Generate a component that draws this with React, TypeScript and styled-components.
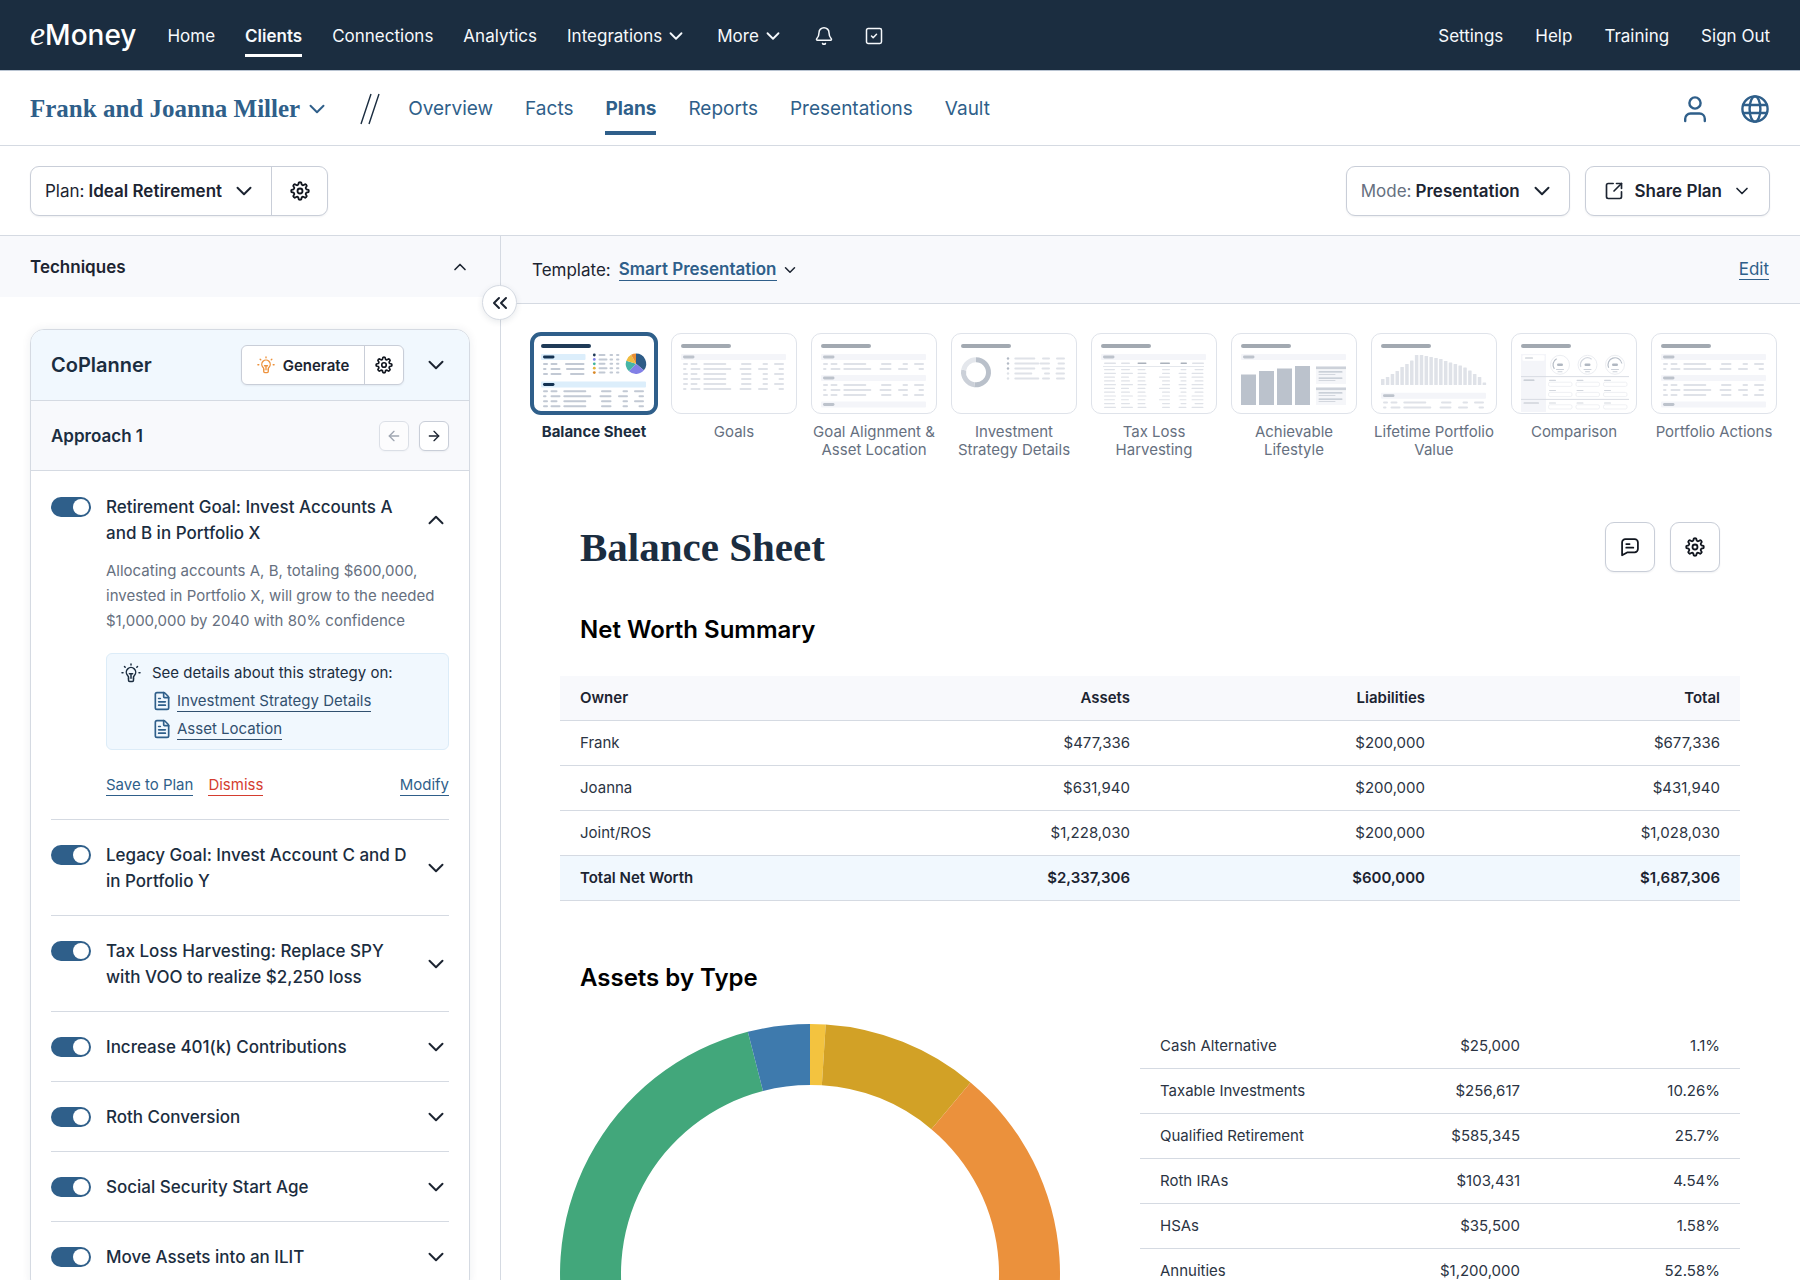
import React from "react";
import styled, { createGlobalStyle, css } from "styled-components";
import {
  ArrowLeft,
  ArrowRight,
  Bell,
  ChevronDown,
  ChevronUp,
  ChevronsLeft,
  FileText,
  SquareArrowOutUpRight,
  SquareCheck,
} from "lucide-react";

const color = {
  navy: "#1b2d40",
  blue: "#2f5f8a",
  ink: "#1c2431",
  body: "#2b3443",
  muted: "#667080",
  line: "#d5dae2",
  control: "#c9ced8",
  panel: "#f8f9fc",
  tint: "#f1f8fe",
  red: "#d43d2f",
  orange: "#ed923c",
};

const sans = `Inter, "Liberation Sans", sans-serif`;
const serif = `"Liberation Serif", serif`;

const GlobalStyle = createGlobalStyle`
  *, *::before, *::after { box-sizing: border-box; }
  body {
    margin: 0;
    font-family: ${sans};
    color: ${color.ink};
    background: #fff;
  }
  button, select, input { font: inherit; color: inherit; }
  button {
    border: 0;
    padding: 0;
    background: none;
    cursor: pointer;
  }
  svg { display: block; flex: none; }
`;

const Shell = styled.div`
  display: flex;
  flex-direction: column;
  height: 100vh;
  overflow: hidden;
`;

/* ---------- Global navigation ---------- */

const TopBar = styled.header`
  flex: none;
  display: flex;
  align-items: center;
  gap: 31px;
  height: 71px;
  padding: 2px 30px 0;
  background: ${color.navy};
  border-bottom: 1px solid #b9c4d2;
  color: #f6f9fc;
`;

const Logo = styled.a`
  display: flex;
  align-items: baseline;
  padding-bottom: 4px;
  color: #fff;
  text-decoration: none;
  font-size: 28px;
  line-height: 40px;
  font-weight: 500;
`;

const LogoInitial = styled.span`
  font-family: ${serif};
  font-style: italic;
  font-weight: 400;
  font-size: 34px;
`;

const TopNav = styled.nav<{ $end?: boolean }>`
  display: flex;
  align-items: center;
  gap: ${(p) => (p.$end ? 32 : 30)}px;
  ${(p) => p.$end && css`margin-left: auto;`}
`;

const TopLink = styled.a<{ $active?: boolean }>`
  color: inherit;
  text-decoration: none;
  font-size: 17px;
  line-height: 36px;
  padding-top: 3px;
  border-bottom: 3px solid ${(p) => (p.$active ? "#fff" : "transparent")};
  font-weight: ${(p) => (p.$active ? 600 : 400)};
`;

const TopMenu = styled.button`
  display: flex;
  align-items: center;
  gap: 3px;
  font-size: 17px;
  line-height: 36px;
`;

/* ---------- Client navigation ---------- */

const ClientBar = styled.div`
  flex: none;
  display: flex;
  align-items: center;
  height: 75px;
  padding: 2px 31px 0 30px;
  border-bottom: 1px solid ${color.line};
  color: ${color.blue};
`;

const ClientButton = styled.button`
  display: flex;
  align-items: center;
  gap: 4px;
  font-family: ${serif};
  font-weight: 700;
  font-size: 25px;
`;

const Slashes = styled.svg`
  margin: 0 28px 0 30px;
`;

const ClientNav = styled.nav`
  display: flex;
  gap: 32px;
`;

const ClientLink = styled.a<{ $active?: boolean }>`
  color: inherit;
  text-decoration: none;
  font-size: 19px;
  line-height: 44px;
  padding-top: 4px;
  border-bottom: 4px solid ${(p) => (p.$active ? color.blue : "transparent")};
  font-weight: ${(p) => (p.$active ? 700 : 400)};
`;

const ClientTools = styled.div`
  display: flex;
  align-items: center;
  gap: 34px;
  margin-left: auto;
`;

/* ---------- Plan toolbar ---------- */

const PlanBar = styled.div`
  flex: none;
  display: flex;
  align-items: center;
  gap: 15px;
  height: 90px;
  padding: 0 30px;
  border-bottom: 1px solid ${color.line};
`;

const Group = styled.div<{ $small?: boolean }>`
  display: flex;
  align-items: stretch;
  height: ${(p) => (p.$small ? 40 : 50)}px;
  border: 1px solid ${color.control};
  border-radius: ${(p) => (p.$small ? 6 : 9)}px;
  background: #fff;
  box-shadow: 0 1px 2px rgba(27, 45, 64, 0.07);
`;

const Spacer = styled.div`
  flex: 1;
`;

const Field = styled.label<{ $muted?: boolean }>`
  display: flex;
  align-items: center;
  padding: 0 14px;
  font-size: 17px;
  color: ${(p) => (p.$muted ? color.muted : color.ink)};
`;

const Select = styled.select<{ $link?: boolean }>`
  appearance: none;
  border: 0;
  border-radius: 0;
  background: none;
  margin: 0 9px 0 4px;
  padding: 0;
  font-weight: 600;
  color: ${color.ink};
  cursor: pointer;
  ${(p) =>
    p.$link &&
    css`
      margin: 0 4px 0 8px;
      color: ${color.blue};
      line-height: 22px;
      border-bottom: 1px solid ${color.blue};
    `}
`;

const GroupButton = styled.button<{ $width: number }>`
  display: flex;
  align-items: center;
  justify-content: center;
  gap: 8px;
  width: ${(p) => p.$width}px;
  font-size: 15px;
  font-weight: 600;
  & + & { border-left: 1px solid ${color.control}; }
  label + & { border-left: 1px solid ${color.control}; }
`;

const ShareButton = styled.button`
  display: flex;
  align-items: center;
  gap: 10px;
  padding: 0 17px 0 18px;
  font-size: 17px;
  font-weight: 600;
`;

/* ---------- Workspace ---------- */

const Workspace = styled.div`
  flex: 1;
  min-height: 0;
  display: flex;
  position: relative;
`;

const Sidebar = styled.aside`
  flex: 0 0 501px;
  overflow-y: auto;
  scrollbar-width: none;
  border-right: 1px solid ${color.line};
`;

const SidebarHeader = styled.div`
  display: flex;
  align-items: center;
  justify-content: space-between;
  height: 61px;
  padding: 0 30px;
  background: ${color.panel};
`;

const SidebarTitle = styled.h2`
  margin: 0;
  font-size: 17px;
  font-weight: 600;
`;

const CollapseButton = styled.button`
  position: absolute;
  top: 49px;
  left: 482px;
  display: grid;
  place-items: center;
  width: 35px;
  height: 35px;
  border: 1px solid ${color.line};
  border-radius: 50%;
  background: #fff;
  box-shadow: 0 2px 6px rgba(27, 45, 64, 0.1);
`;

const Card = styled.section`
  margin: 32px 30px 30px;
  border: 1px solid ${color.line};
  border-radius: 14px;
  background: #fff;
  box-shadow: 0 0 10px rgba(27, 45, 64, 0.07);
  overflow: hidden;
`;

const CardHeader = styled.div`
  display: flex;
  align-items: center;
  gap: 19px;
  height: 71px;
  padding: 0 20px;
  background: ${color.tint};
  border-bottom: 1px solid ${color.line};
`;

const CardTitle = styled.h3`
  flex: 1;
  margin: 0;
  font-size: 20px;
  font-weight: 600;
  color: ${color.navy};
`;

const ApproachBar = styled.div`
  display: flex;
  align-items: center;
  gap: 10px;
  height: 70px;
  padding: 0 20px;
  background: ${color.panel};
  border-bottom: 1px solid ${color.line};
`;

const ApproachTitle = styled.h4`
  flex: 1;
  margin: 0;
  font-size: 17px;
  font-weight: 600;
  color: ${color.navy};
`;

const StepButton = styled.button`
  display: grid;
  place-items: center;
  width: 30px;
  height: 30px;
  border: 1px solid ${color.control};
  border-radius: 6px;
  background: #fff;
  box-shadow: 0 1px 2px rgba(27, 45, 64, 0.06);
  &:disabled {
    opacity: 0.6;
    color: ${color.muted};
    cursor: default;
  }
`;

const TechniqueList = styled.ul`
  list-style: none;
  margin: 0;
  padding: 1px 20px 0;
`;

const TechniqueItem = styled.li`
  padding: 22px 0 21px;
  border-bottom: 1px solid ${color.line};
`;

const TechniqueHead = styled.div`
  display: flex;
  align-items: center;
  gap: 12px;
`;

const ToggleRow = styled.div`
  flex: 1;
  display: flex;
  align-items: flex-start;
  gap: 15px;
`;

const Toggle = styled.input`
  appearance: none;
  flex: none;
  width: 40px;
  height: 20px;
  margin: 3px 0;
  padding: 2px;
  border-radius: 10px;
  background: #aab3c0;
  cursor: pointer;
  &::before {
    content: "";
    display: block;
    width: 16px;
    height: 16px;
    border-radius: 50%;
    background: #fff;
  }
  &:checked { background: ${color.blue}; }
  &:checked::before { margin-left: auto; }
`;

const TechniqueName = styled.label`
  font-size: 17px;
  line-height: 26px;
  font-weight: 500;
  color: ${color.navy};
`;

const TechniqueBody = styled.div`
  padding: 12px 0 0 55px;
`;

const Description = styled.p`
  margin: 0;
  font-size: 15px;
  line-height: 25px;
  color: ${color.muted};
`;

const Callout = styled.div`
  display: grid;
  grid-template-columns: auto 1fr;
  column-gap: 11px;
  margin: 20px 0 23px;
  padding: 5px 14px 6px;
  border: 1px solid #dcecf8;
  border-radius: 6px;
  background: ${color.tint};
  font-size: 15px;
  line-height: 28px;
  color: ${color.navy};
`;

const CalloutIcon = styled.span`
  display: grid;
  place-items: center;
  height: 28px;
  color: ${color.navy};
`;

const CalloutLink = styled.div`
  grid-column: 2;
  display: flex;
  align-items: center;
  gap: 5px;
  height: 28px;
  color: ${color.blue};
`;

const TextLink = styled.a<{ $tone?: "danger" | "dark"; $size?: number }>`
  display: inline-block;
  font-size: ${(p) => p.$size ?? 15}px;
  line-height: 20px;
  text-decoration: none;
  color: ${(p) => (p.$tone === "danger" ? color.red : p.$tone === "dark" ? "#31506f" : color.blue)};
  border-bottom: 1px solid currentColor;
`;

const Actions = styled.div`
  display: flex;
  align-items: center;
  gap: 15px;
  height: 25px;
`;

/* ---------- Presentation ---------- */

const Main = styled.main`
  flex: 1;
  min-width: 0;
  overflow-y: auto;
  scrollbar-width: none;
`;

const TemplateBar = styled.div`
  display: flex;
  align-items: center;
  justify-content: space-between;
  height: 68px;
  padding: 0 31px;
  background: ${color.panel};
  border-bottom: 1px solid ${color.line};
`;

const TemplateField = styled.label`
  display: flex;
  align-items: center;
  font-size: 17px;
`;

const Strip = styled.div`
  display: flex;
  gap: 14px;
  padding: 29px 23px 0 30px;
  overflow-x: auto;
  scrollbar-width: none;
`;

const PageButton = styled.button<{ $active?: boolean }>`
  flex: none;
  display: flex;
  flex-direction: column;
  align-items: center;
  gap: 9px;
  width: 126px;
  font-size: 15px;
  line-height: 18px;
  font-weight: ${(p) => (p.$active ? 700 : 400)};
  color: ${(p) => (p.$active ? color.navy : color.muted)};
`;

const PageFrame = styled.span<{ $active?: boolean }>`
  width: 126px;
  height: 81px;
  border-radius: 10px;
  border: 1px solid #dfe3ea;
  background: #fff;
  overflow: hidden;
  ${(p) =>
    p.$active &&
    css`
      outline: 4px solid ${color.blue};
      outline-offset: -3px;
    `}
`;

const Report = styled.article`
  padding: 62px 60px 60px 59px;
`;

const ReportHeader = styled.div`
  display: flex;
  align-items: center;
  gap: 15px;
  padding: 0 20px;
`;

const ReportTitle = styled.h1`
  flex: 1;
  margin: 0;
  font-family: ${serif};
  font-weight: 700;
  font-size: 41px;
  line-height: 52px;
  color: ${color.navy};
`;

const IconButton = styled.button`
  display: grid;
  place-items: center;
  width: 50px;
  height: 50px;
  border: 1px solid ${color.control};
  border-radius: 9px;
  background: #fff;
  box-shadow: 0 1px 2px rgba(27, 45, 64, 0.07);
`;

const SectionTitle = styled.h2<{ $top: number }>`
  margin: ${(p) => p.$top}px 20px 30px;
  font-size: 24px;
  line-height: 32px;
  font-weight: 600;
  color: #000;
`;

const Table = styled.table`
  width: 100%;
  table-layout: fixed;
  border-collapse: separate;
  border-spacing: 0;
  font-size: 15px;
  line-height: 20px;
  color: ${color.body};
`;

const Cell = styled.td`
  height: 45px;
  padding: 0 20px;
  text-align: right;
  border-bottom: 1px solid ${color.line};
  &:first-child { text-align: left; }
`;

const HeadCell = styled(Cell)`
  font-weight: 600;
  background: ${color.panel};
  color: ${color.ink};
`;

const TotalCell = styled(Cell)`
  font-weight: 600;
  background: ${color.tint};
  color: ${color.ink};
`;

const Breakdown = styled.div`
  display: grid;
  grid-template-columns: 5fr 6fr;
  gap: 80px;
  align-items: start;
`;

/* ---------- Icons ---------- */

const gearPath = (() => {
  const pt = (r: number, deg: number) => {
    const a = ((deg - 90) * Math.PI) / 180;
    return `${(12 + r * Math.cos(a)).toFixed(2)} ${(12 + r * Math.sin(a)).toFixed(2)}`;
  };
  let d = "";
  for (let i = 0; i < 8; i++) {
    const c = i * 45;
    d += `${i ? "L" : "M"}${pt(8, c - 15)}L${pt(10.2, c - 8)}Q${pt(10.9, c)} ${pt(10.2, c + 8)}L${pt(8, c + 15)}Q${pt(7.2, c + 22.5)} ${pt(8, c + 30)}`;
  }
  return d + "Z";
})();

const stroke = {
  fill: "none",
  stroke: "currentColor",
  strokeLinecap: "round" as const,
  strokeLinejoin: "round" as const,
};

const Gear = ({ size = 20 }: { size?: number }) => (
  <svg width={size} height={size} viewBox="0 0 24 24" {...stroke} strokeWidth={2.2} color="#11161f">
    <path d={gearPath} />
    <circle cx="12" cy="12" r="3" />
  </svg>
);

const Bulb = ({ size = 20 }: { size?: number }) => (
  <svg width={size} height={size} viewBox="0 0 24 24" {...stroke} strokeWidth={1.8}>
    <path d="M9 18.2v-1.3c0-.8-.5-1.4-1.1-2a5.6 5.6 0 1 1 8.2 0c-.6.6-1.1 1.2-1.1 2v1.3" />
    <path d="M9 18.2v2.6a1.4 1.4 0 0 0 1.4 1.4h3.2a1.4 1.4 0 0 0 1.4-1.4v-2.6" />
    <path d="M10 13h4M12 13v5.4" />
    <path d="M12 1.2v1.2M4.2 4.2l.8.8M19.8 4.2l-.8.8M1.2 11.6h1.2M21.6 11.6h1.2" />
  </svg>
);

const Note = () => (
  <svg width="20" height="20" viewBox="0 0 24 24" {...stroke} strokeWidth={2.1} color="#11161f">
    <path d="M2.5 22V6.5a4 4 0 0 1 4-4h11a4 4 0 0 1 4 4v8a4 4 0 0 1-4 4h-9z" />
    <path d="M7.5 8.5h4M7.5 12.8h8.5" />
  </svg>
);

const Person = () => (
  <svg width="24" height="28" viewBox="0 0 24 28" {...stroke} strokeWidth={2.4}>
    <circle cx="12" cy="8" r="5.6" />
    <path d="M2.2 26v-2.2A5.3 5.3 0 0 1 7.5 18.5h9a5.3 5.3 0 0 1 5.3 5.3V26" />
  </svg>
);

const Globe = () => (
  <svg width="28" height="28" viewBox="0 0 28 28" {...stroke} strokeWidth={2.4}>
    <circle cx="14" cy="14" r="12.6" />
    <ellipse cx="14" cy="14" rx="5.4" ry="12.6" />
    <path d="M2.2 10h23.6M2.2 18h23.6" />
  </svg>
);

/* ---------- Page miniatures ---------- */

type Tone = { title: string; band: string; tick: string; row: string };
const faded: Tone = { title: "#a2a9b1", band: "#f4f5f9", tick: "#bdc3cc", row: "#dfe2e8" };
const vivid: Tone = { title: "#1f3a57", band: "#dceefb", tick: "#143252", row: "#c2c9d4" };

const Bar = (p: { x: number; y: number; w: number; h?: number; c: string }) => (
  <rect x={p.x} y={p.y} width={p.w} height={p.h ?? 2} rx={(p.h ?? 2) / 2} fill={p.c} />
);

const Band = ({ y, tone, w = 105 }: { y: number; tone: Tone; w?: number }) => (
  <g>
    <rect x="10" y={y} width={w} height="6" rx="1" fill={tone.band} />
    <Bar x={12} y={y + 1.6} w={11.5} h={2.8} c={tone.tick} />
  </g>
);

const rowShapes = [
  [5, 7, 23, 10.5, 5.5, 10],
  [3.5, 10, 28, 12, 10, 5.5],
  [5, 7, 23, 10.5, 5.5, 10],
  [5, 10, 23, 10.5, 5.5, 5.5],
];

const Rows = ({ y, n, tone }: { y: number; n: number; tone: Tone }) => (
  <g>
    {Array.from({ length: n }, (_, i) => {
      const s = rowShapes[i % 4];
      const t = y + i * 5 - 1;
      return (
        <g key={i}>
          <Bar x={12} y={t} w={s[0]} c={tone.row} />
          <Bar x={19.5} y={t} w={s[1]} c={tone.row} />
          <Bar x={32.3} y={t} w={s[2]} c={tone.row} />
          <Bar x={80.5 - s[3]} y={t} w={s[3]} c={tone.row} />
          <Bar x={97 - s[4]} y={t} w={s[4]} c={tone.row} />
          <Bar x={113 - s[5]} y={t} w={s[5]} c={tone.row} />
        </g>
      );
    })}
  </g>
);

const polar = (cx: number, cy: number, r: number, turn: number) => {
  const a = turn * 2 * Math.PI - Math.PI / 2;
  return `${(cx + r * Math.cos(a)).toFixed(2)} ${(cy + r * Math.sin(a)).toFixed(2)}`;
};

const arc = (cx: number, cy: number, r: number, from: number, to: number) =>
  `M${polar(cx, cy, r, from)}A${r} ${r} 0 ${to - from > 0.5 ? 1 : 0} 1 ${polar(cx, cy, r, to)}`;

const ringPath = (cx: number, cy: number, ro: number, ri: number, from: number, to: number) => {
  const big = to - from > 0.5 ? 1 : 0;
  return `M${polar(cx, cy, ro, from)}A${ro} ${ro} 0 ${big} 1 ${polar(cx, cy, ro, to)}L${polar(cx, cy, ri, to)}A${ri} ${ri} 0 ${big} 0 ${polar(cx, cy, ri, from)}Z`;
};

const BalanceMini = () => (
  <g>
    <Band y={21} w={44.5} tone={vivid} />
    {[[5, 7, 19.5], [3.5, 10, 18.5], [5, 11, 14.5]].map((s, i) => (
      <g key={i}>
        <Bar x={12} y={30 + i * 5} w={s[0]} c={vivid.row} />
        <Bar x={19.5} y={30 + i * 5} w={s[1]} c={vivid.row} />
        <Bar x={53.5 - s[2]} y={30 + i * 5} w={s[2]} c={vivid.row} />
      </g>
    ))}
    {["#1f3a57", "#8280e6", "#3db39a", "#e3b53c", "#d98928"].map((c, i) => (
      <g key={c}>
        <circle cx="63.3" cy={22 + i * 4.4} r="1.4" fill={c} />
        <Bar x={67.5} y={21 + i * 4.4} w={i % 2 ? 9 : 7} c={vivid.row} />
        <Bar x={78.5} y={21 + i * 4.4} w={3.6} c={vivid.row} />
        <Bar x={85} y={21 + i * 4.4} w={3.4} c={vivid.row} />
      </g>
    ))}
    {[
      [0, 0.36, "#2e5c87"],
      [0.36, 0.62, "#8280e6"],
      [0.62, 0.8, "#46b5a6"],
      [0.8, 0.92, "#f0bc40"],
      [0.92, 1, "#ea8f35"],
    ].map(([a, b, c]) => (
      <path key={c} d={ringPath(105, 30.8, 10.2, 0.01, a as number, b as number)} fill={c as string} />
    ))}
    <Band y={48.5} tone={vivid} />
    <Rows y={58.3} n={4} tone={vivid} />
  </g>
);

const StackMini = () => (
  <g>
    <Band y={21} tone={faded} />
    <Rows y={31} n={2} tone={faded} />
    <Band y={42} tone={faded} />
    <Rows y={52} n={3} tone={faded} />
    <Band y={68.5} tone={faded} />
  </g>
);

const GoalsMini = () => (
  <g>
    <Band y={21} tone={faded} />
    <Rows y={31} n={6} tone={faded} />
  </g>
);

const StrategyMini = () => (
  <g>
    <path d={ringPath(25, 39.3, 15, 10, 0, 0.52)} fill="#b9c0ca" />
    <path d={ringPath(25, 39.3, 15, 10, 0.52, 0.78)} fill="#cbd0d8" />
    <path d={ringPath(25, 39.3, 15, 10, 0.78, 1)} fill="#e4e7ec" />
    {[[21, 8, 9], [25, 10.5, 7.5], [21, 8.5, 9], [18, 6, 9.5], [25, 8, 9]].map((s, i) => (
      <g key={i}>
        <circle cx="57" cy={25.5 + i * 5} r="1.2" fill={i < 3 ? "#b3bac5" : "#dfe2e8"} />
        <Bar x={63.3} y={24.5 + i * 5} w={s[0]} c={faded.row} />
        <Bar x={99 - s[1]} y={24.5 + i * 5} w={s[1]} c={faded.row} />
        <Bar x={114 - s[2]} y={24.5 + i * 5} w={s[2]} c={faded.row} />
      </g>
    ))}
  </g>
);

const HarvestMini = () => (
  <g>
    <Band y={21} tone={faded} />
    {[13, 30, 46.5].map((x, i) => (
      <Bar key={x} x={x} y={29.6} w={[12, 9, 9][i]} h={1.4} c={i === 2 ? "#aab1bb" : faded.row} />
    ))}
    {[69, 89.5, 101].map((x, i) => (
      <Bar key={x} x={x} y={29.6} w={[10, 6.5, 12][i]} h={1.4} c={i < 2 ? "#aab1bb" : faded.row} />
    ))}
    <rect x="12" y="33" width="101" height="0.7" fill="#d9dde4" />
    {Array.from({ length: 11 }, (_, i) => {
      const y = 36 + i * 3.77;
      const k = i % 3;
      return (
        <g key={i}>
          <Bar x={13} y={y} w={[11, 12, 11][k]} h={1.2} c={faded.row} />
          <Bar x={30} y={y} w={[9, 12, 8][k]} h={1.2} c={faded.row} />
          <Bar x={46.5} y={y} w={[8, 9, 8][k]} h={1.2} c={faded.row} />
          <Bar x={79 - [8, 8, 11][k]} y={y} w={[8, 8, 11][k]} h={1.2} c={faded.row} />
          <Bar x={95.5 - [6, 8, 7][k]} y={y} w={[6, 8, 7][k]} h={1.2} c={faded.row} />
          <Bar x={112.5 - [9, 12, 12][k]} y={y} w={[9, 12, 12][k]} h={1.2} c={faded.row} />
        </g>
      );
    })}
  </g>
);

const LifestyleMini = () => (
  <g>
    <Band y={21} tone={faded} />
    {[41.5, 38, 35.5, 33].map((y, i) => (
      <rect key={y} x={10 + i * 18} y={y} width="15" height={72 - y} fill="#bbc2cc" />
    ))}
    {[33.5, 54.5].map((y) => (
      <g key={y}>
        <rect x="85" y={y} width="30" height="17.5" fill="#f5f6f9" />
        <rect x="85" y={y} width="30" height="2.6" fill="#ccd1d9" />
        <Bar x={87.5} y={y + 4.8} w={24} h={1.2} c="#bcc3cd" />
        <Bar x={87.5} y={y + 7.6} w={17} h={1} c="#d3d7de" />
        <Bar x={87.5} y={y + 11} w={24} h={1.2} c="#bcc3cd" />
        <Bar x={87.5} y={y + 13.6} w={17} h={1} c="#d3d7de" />
      </g>
    ))}
  </g>
);

const lifetime = [6, 8, 11, 14, 18, 21, 24.5, 30, 30, 29, 28, 27, 26, 24, 22.5, 21, 19.5, 17.5, 14.5, 11, 8, 2.5];

const LifetimeMini = () => (
  <g>
    {lifetime.map((h, i) => (
      <rect key={i} x={10 + i * 4.84} y={52 - h} width="3.5" height={h} rx="0.5" fill="#dfe2e8" />
    ))}
    <Band y={59.7} tone={faded} />
    <Rows y={69.5} n={2} tone={faded} />
  </g>
);

const ComparisonMini = () => (
  <g>
    <rect x="10" y="21" width="25" height="58" fill="#f4f5f9" />
    <rect x="11.5" y="22.3" width="22" height="5.4" rx="1" fill="#fff" />
    <Bar x={14} y={24.5} w={8} h={1} c="#bdc3cc" />
    {[49, 76.5, 104].map((x, i) => (
      <g key={x}>
        <circle cx={x} cy="31.8" r="9.5" fill="#fff" stroke="#e6e8ed" strokeWidth="0.8" />
        <path
          d={arc(x, 31.8, 7, [0.65, 0.7, 0.68][i], [0.92, 1.1, 1.22][i])}
          fill="none"
          stroke={["#b3bac4", "#d3d7de", "#b9c0ca"][i]}
          strokeWidth="1.2"
        />
        <Bar x={x - 3} y={30.5} w={6} h={2.4} c="#b0b7c1" />
        <Bar x={x - 4} y={36} w={8} h={1} c="#ccd1d9" />
        <Bar x={x - 2.5} y={38.2} w={5} h={1} c="#ccd1d9" />
        {[46.8, 57, 69.4].map((y) => (
          <g key={y}>
            <Bar x={x - 11} y={y} w={7} h={1.1} c="#d3d7de" />
            <rect x={x - 11.5} y={y + 2.4} width="23.5" height="4.2" rx="1.6" fill="#fff" stroke="#e9ebef" strokeWidth="0.7" />
          </g>
        ))}
      </g>
    ))}
    <rect x="10" y="43.2" width="108" height="0.9" fill="#d5d9e0" />
    <rect x="10" y="65.9" width="108" height="0.9" fill="#d5d9e0" />
    <Bar x={12.5} y={46.6} w={11} h={1.2} c="#bdc3cc" />
    <Bar x={12.5} y={69.4} w={15.5} h={1.2} c="#bdc3cc" />
  </g>
);

const pages: { name: string; Mini: () => React.ReactElement; active?: boolean }[] = [
  { name: "Balance Sheet", Mini: BalanceMini, active: true },
  { name: "Goals", Mini: GoalsMini },
  { name: "Goal Alignment & Asset Location", Mini: StackMini },
  { name: "Investment Strategy Details", Mini: StrategyMini },
  { name: "Tax Loss Harvesting", Mini: HarvestMini },
  { name: "Achievable Lifestyle", Mini: LifestyleMini },
  { name: "Lifetime Portfolio Value", Mini: LifetimeMini },
  { name: "Comparison", Mini: ComparisonMini },
  { name: "Portfolio Actions", Mini: StackMini },
];

/* ---------- Data ---------- */

const techniques = [
  "Retirement Goal: Invest Accounts A and B in Portfolio X",
  "Legacy Goal: Invest Account C and D in Portfolio Y",
  "Tax Loss Harvesting: Replace SPY with VOO to realize $2,250 loss",
  "Increase 401(k) Contributions",
  "Roth Conversion",
  "Social Security Start Age",
  "Move Assets into an ILIT",
];

const netWorth = [
  ["Frank", "$477,336", "$200,000", "$677,336"],
  ["Joanna", "$631,940", "$200,000", "$431,940"],
  ["Joint/ROS", "$1,228,030", "$200,000", "$1,028,030"],
];

const assets = [
  ["Cash Alternative", "$25,000", "1.1%"],
  ["Taxable Investments", "$256,617", "10.26%"],
  ["Qualified Retirement", "$585,345", "25.7%"],
  ["Roth IRAs", "$103,431", "4.54%"],
  ["HSAs", "$35,500", "1.58%"],
  ["Annuities", "$1,200,000", "52.58%"],
];

const slices: [number, string][] = [
  [1, "#f3c33f"],
  [10.1, "#d2a126"],
  [25.7, "#eb913c"],
  [4.54, "#d9694a"],
  [1.58, "#8280e6"],
  [53.08, "#42a77b"],
  [4, "#3e7aad"],
];

const AssetChart = () => {
  let from = 0;
  return (
    <svg viewBox="0 0 500 500" width="100%" role="img" aria-label="Assets by type">
      {slices.map(([share, fill]) => {
        const start = from;
        from += share / 100;
        return <path key={fill} d={ringPath(250, 250, 250, 189, start, from)} fill={fill} />;
      })}
    </svg>
  );
};

/* ---------- Page ---------- */

const OrangeIcon = styled.span`
  color: ${color.orange};
`;

const TechniquePanel = () => (
  <Sidebar>
    <SidebarHeader>
      <SidebarTitle>Techniques</SidebarTitle>
      <button aria-label="Collapse techniques">
        <ChevronUp size={20} />
      </button>
    </SidebarHeader>
    <Card>
      <CardHeader>
        <CardTitle>CoPlanner</CardTitle>
        <Group $small>
          <GroupButton $width={122}>
            <OrangeIcon>
              <Bulb size={18} />
            </OrangeIcon>
            Generate
          </GroupButton>
          <GroupButton $width={39} aria-label="CoPlanner settings">
            <Gear size={18} />
          </GroupButton>
        </Group>
        <button aria-label="Expand CoPlanner">
          <ChevronDown size={26} strokeWidth={1.8} />
        </button>
      </CardHeader>
      <ApproachBar>
        <ApproachTitle>Approach 1</ApproachTitle>
        <StepButton disabled aria-label="Previous approach">
          <ArrowLeft size={16} />
        </StepButton>
        <StepButton aria-label="Next approach">
          <ArrowRight size={16} />
        </StepButton>
      </ApproachBar>
      <TechniqueList>
        {techniques.map((name, i) => (
          <TechniqueItem key={name}>
            <TechniqueHead>
              <ToggleRow>
                <Toggle type="checkbox" role="switch" id={`technique-${i}`} defaultChecked />
                <TechniqueName htmlFor={`technique-${i}`}>{name}</TechniqueName>
              </ToggleRow>
              <button aria-label={`Details: ${name}`} aria-expanded={i === 0}>
                {i === 0 ? <ChevronUp size={26} strokeWidth={1.8} /> : <ChevronDown size={26} strokeWidth={1.8} />}
              </button>
            </TechniqueHead>
            {i === 0 && (
              <TechniqueBody>
                <Description>
                  Allocating accounts A, B, totaling $600,000, invested in Portfolio X, will grow to the needed
                  $1,000,000 by 2040 with 80% confidence
                </Description>
                <Callout>
                  <CalloutIcon>
                    <Bulb size={20} />
                  </CalloutIcon>
                  <span>See details about this strategy on:</span>
                  <CalloutLink>
                    <FileText size={20} />
                    <TextLink href="#strategy" $tone="dark">Investment Strategy Details</TextLink>
                  </CalloutLink>
                  <CalloutLink>
                    <FileText size={20} />
                    <TextLink href="#location" $tone="dark">Asset Location</TextLink>
                  </CalloutLink>
                </Callout>
                <Actions>
                  <TextLink href="#save">Save to Plan</TextLink>
                  <TextLink href="#dismiss" $tone="danger">Dismiss</TextLink>
                  <Spacer />
                  <TextLink href="#modify">Modify</TextLink>
                </Actions>
              </TechniqueBody>
            )}
          </TechniqueItem>
        ))}
      </TechniqueList>
    </Card>
  </Sidebar>
);

export default function App() {
  return (
    <Shell>
      <GlobalStyle />
      <TopBar>
        <Logo href="#home">
          <LogoInitial>e</LogoInitial>Money
        </Logo>
        <TopNav>
          <TopLink href="#home">Home</TopLink>
          <TopLink href="#clients" $active>Clients</TopLink>
          <TopLink href="#connections">Connections</TopLink>
          <TopLink href="#analytics">Analytics</TopLink>
          <TopMenu>
            Integrations <ChevronDown size={22} />
          </TopMenu>
          <TopMenu>
            More <ChevronDown size={22} />
          </TopMenu>
          <button aria-label="Notifications">
            <Bell size={20} strokeWidth={1.8} />
          </button>
          <button aria-label="Tasks">
            <SquareCheck size={20} strokeWidth={1.8} />
          </button>
        </TopNav>
        <TopNav $end>
          <TopLink href="#settings">Settings</TopLink>
          <TopLink href="#help">Help</TopLink>
          <TopLink href="#training">Training</TopLink>
          <TopLink href="#signout">Sign Out</TopLink>
        </TopNav>
      </TopBar>

      <ClientBar>
        <ClientButton>
          Frank and Joanna Miller <ChevronDown size={26} strokeWidth={1.8} />
        </ClientButton>
        <Slashes width="20" height="32" viewBox="0 0 20 32" stroke={color.navy} strokeWidth="1.4">
          <path d="M1 31 11 1M9 31 19 1" />
        </Slashes>
        <ClientNav>
          <ClientLink href="#overview">Overview</ClientLink>
          <ClientLink href="#facts">Facts</ClientLink>
          <ClientLink href="#plans" $active>Plans</ClientLink>
          <ClientLink href="#reports">Reports</ClientLink>
          <ClientLink href="#presentations">Presentations</ClientLink>
          <ClientLink href="#vault">Vault</ClientLink>
        </ClientNav>
        <ClientTools>
          <button aria-label="Profile">
            <Person />
          </button>
          <button aria-label="Client site">
            <Globe />
          </button>
        </ClientTools>
      </ClientBar>

      <PlanBar>
        <Group>
          <Field>
            Plan:
            <Select defaultValue="ideal">
              <option value="ideal">Ideal Retirement</option>
            </Select>
            <ChevronDown size={26} strokeWidth={1.8} />
          </Field>
          <GroupButton $width={56} aria-label="Plan settings">
            <Gear />
          </GroupButton>
        </Group>
        <Spacer />
        <Group>
          <Field $muted>
            Mode:
            <Select defaultValue="presentation">
              <option value="presentation">Presentation</option>
            </Select>
            <ChevronDown size={26} strokeWidth={1.8} color={color.ink} />
          </Field>
        </Group>
        <Group>
          <ShareButton>
            <SquareArrowOutUpRight size={20} />
            Share Plan
            <ChevronDown size={20} />
          </ShareButton>
        </Group>
      </PlanBar>

      <Workspace>
        <TechniquePanel />
        <Main>
          <TemplateBar>
            <TemplateField>
              Template:
              <Select $link defaultValue="smart">
                <option value="smart">Smart Presentation</option>
              </Select>
              <ChevronDown size={18} />
            </TemplateField>
            <TextLink href="#edit" $size={17}>Edit</TextLink>
          </TemplateBar>

          <Strip>
            {pages.map(({ name, Mini, active }) => (
              <PageButton key={name} $active={active}>
                <PageFrame $active={active}>
                  <svg width="126" height="81" viewBox="1 1 126 81" aria-hidden="true">
                    <Bar x={10} y={11} w={50} h={4} c={active ? vivid.title : faded.title} />
                    <Mini />
                  </svg>
                </PageFrame>
                {name}
              </PageButton>
            ))}
          </Strip>

          <Report>
            <ReportHeader>
              <ReportTitle>Balance Sheet</ReportTitle>
              <IconButton aria-label="Notes">
                <Note />
              </IconButton>
              <IconButton aria-label="Report settings">
                <Gear />
              </IconButton>
            </ReportHeader>

            <SectionTitle $top={41}>Net Worth Summary</SectionTitle>
            <Table>
              <thead>
                <tr>
                  {["Owner", "Assets", "Liabilities", "Total"].map((h) => (
                    <HeadCell as="th" scope="col" key={h}>{h}</HeadCell>
                  ))}
                </tr>
              </thead>
              <tbody>
                {netWorth.map((row) => (
                  <tr key={row[0]}>
                    {row.map((v, i) => (
                      <Cell key={i}>{v}</Cell>
                    ))}
                  </tr>
                ))}
                <tr>
                  {["Total Net Worth", "$2,337,306", "$600,000", "$1,687,306"].map((v) => (
                    <TotalCell key={v}>{v}</TotalCell>
                  ))}
                </tr>
              </tbody>
            </Table>

            <SectionTitle $top={61}>Assets by Type</SectionTitle>
            <Breakdown>
              <AssetChart />
              <Table>
                <tbody>
                  {assets.map((row) => (
                    <tr key={row[0]}>
                      {row.map((v, i) => (
                        <Cell key={i}>{v}</Cell>
                      ))}
                    </tr>
                  ))}
                </tbody>
              </Table>
            </Breakdown>
          </Report>
        </Main>
        <CollapseButton aria-label="Collapse sidebar">
          <ChevronsLeft size={24} />
        </CollapseButton>
      </Workspace>
    </Shell>
  );
}
